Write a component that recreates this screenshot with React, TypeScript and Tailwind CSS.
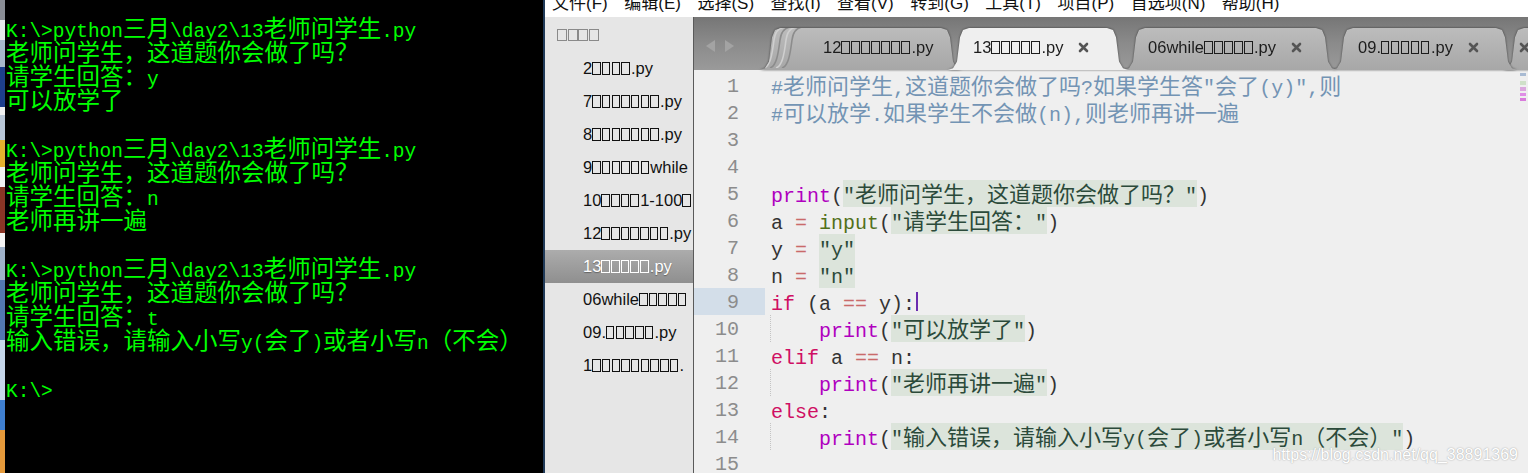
import React from 'react';

const CJK = /([\u2E80-\u9FFF\u3000-\u303F\uFF00-\uFFEF]+)/;

function Mixed({ text, cjk }: { text: string; cjk: string }) {
  return (
    <>
      {text.split(CJK).map((s, i) =>
        s === '' ? null : i % 2 === 1 ? (
          <span key={i} className={cjk}>
            {s}
          </span>
        ) : (
          <span key={i}>{s}</span>
        ),
      )}
    </>
  );
}

// missing-glyph boxes, as the editor shows them
function Tofu({ text, box }: { text: string; box: string }) {
  return (
    <>
      {text.split('').map((c, i) =>
        c === '□' ? <span key={i} className={box} /> : <span key={i}>{c}</span>,
      )}
    </>
  );
}

const strip: [number, string][] = [
  [20, '#8a8e96'],
  [20, '#e4e6ea'],
  [27, '#a9b8cc'],
  [40, '#1e3f8e'],
  [8, '#f0f0f0'],
  [25, '#b8c6d6'],
  [27, '#e3b22e'],
  [20, '#f2f2f2'],
  [46, '#8b3526'],
  [14, '#f4f4f4'],
  [33, '#9fb2c9'],
  [60, '#5277b0'],
  [60, '#c5d6ea'],
  [30, '#3f7fd0'],
  [43, '#e59a3b'],
];

const termLines = [
  'K:\\>python三月\\day2\\13老师问学生.py',
  '老师问学生，这道题你会做了吗？',
  '请学生回答：y',
  '可以放学了',
  '',
  'K:\\>python三月\\day2\\13老师问学生.py',
  '老师问学生，这道题你会做了吗？',
  '请学生回答：n',
  '老师再讲一遍',
  '',
  'K:\\>python三月\\day2\\13老师问学生.py',
  '老师问学生，这道题你会做了吗？',
  '请学生回答：t',
  '输入错误，请输入小写y(会了)或者小写n（不会）',
  '',
  'K:\\>',
];

const menu = ['文件(F)', '编辑(E)', '选择(S)', '查找(I)', '查看(V)', '转到(G)', '工具(T)', '项目(P)', '首选项(N)', '帮助(H)'];

const files = [
  '2□□□□.py',
  '7□□□□□□□.py',
  '8□□□□□□□.py',
  '9□□□□□□while',
  '10□□□□1-100□',
  '12□□□□□□□.py',
  '13□□□□□.py',
  '06while□□□□□',
  '09.□□□□□.py',
  '1□□□□□□□□□.',
];

const colors: Record<string, string> = {
  cm: 'text-[#7394b4]',
  kw: 'text-[#cf0f63]',
  fn: 'text-[#b000bf]',
  bi: 'text-[#52701a]',
  op: 'text-[#c96a6a]',
  st: 'bg-[#dce4db] text-[#2b4a3a]',
  pl: 'text-[#333333]',
  ig: 'border-l border-dotted border-[#c4c4c4] -ml-px',
};

type Tok = [string, string];

const code: Tok[][] = [
  [['#老师问学生,这道题你会做了吗?如果学生答"会了(y)",则', 'cm']],
  [['#可以放学.如果学生不会做(n),则老师再讲一遍', 'cm']],
  [],
  [],
  [['print', 'fn'], ['(', 'pl'], ['"老师问学生，这道题你会做了吗？"', 'st'], [')', 'pl']],
  [['a ', 'pl'], ['=', 'op'], [' ', 'pl'], ['input', 'bi'], ['(', 'pl'], ['"请学生回答："', 'st'], [')', 'pl']],
  [['y ', 'pl'], ['=', 'op'], [' ', 'pl'], ['"y"', 'st']],
  [['n ', 'pl'], ['=', 'op'], [' ', 'pl'], ['"n"', 'st']],
  [['if', 'kw'], [' (a ', 'pl'], ['==', 'op'], [' y):', 'pl'], ['', 'caret']],
  [['    ', 'ig'], ['print', 'fn'], ['(', 'pl'], ['"可以放学了"', 'st'], [')', 'pl']],
  [['elif', 'kw'], [' a ', 'pl'], ['==', 'op'], [' n:', 'pl']],
  [['    ', 'ig'], ['print', 'fn'], ['(', 'pl'], ['"老师再讲一遍"', 'st'], [')', 'pl']],
  [['else', 'kw'], [':', 'pl']],
  [['    ', 'ig'], ['print', 'fn'], ['(', 'pl'], ['"输入错误，请输入小写y(会了)或者小写n（不会）"', 'st'], [')', 'pl']],
  [],
];

const tabClip =
  '[clip-path:polygon(0_100%,5px_96%,9px_80%,12px_22%,15px_5%,21px_0,calc(100%_-_21px)_0,calc(100%_-_15px)_5%,calc(100%_-_12px)_22%,calc(100%_-_9px)_80%,calc(100%_-_5px)_96%,100%_100%)]';

const tabBox = 'mr-[1.5px] inline-block h-[13px] w-[8.5px] border border-current align-[-1px]';

function Close() {
  return (
    <svg width="11" height="11" viewBox="0 0 11 11" className="shrink-0">
      <path d="M2 2L9 9M9 2L2 9" stroke="#555" strokeWidth="2.6" strokeLinecap="round" />
    </svg>
  );
}

function Tab({
  outer,
  inner,
  label,
  active,
  close = true,
  children,
}: {
  outer: string;
  inner: string;
  label?: string;
  active?: boolean;
  close?: boolean;
  children?: React.ReactNode;
}) {
  return (
    <div className={`${outer} h-[42px] shrink-0 drop-shadow-[0_0_1px_rgba(0,0,0,0.55)]`}>
      <div
        className={`${tabClip} ${inner} flex h-full items-center gap-[15px] whitespace-nowrap pb-[4px] text-[16.5px] text-[#1c1c1c] ${
          active ? 'bg-[#efefef]' : 'bg-gradient-to-b from-[#bcbcbc] to-[#a7a7a7]'
        }`}
      >
        {children}
        {label && (
          <span>
            <Tofu text={label} box={tabBox} />
          </span>
        )}
        {close && <Close />}
      </div>
    </div>
  );
}

function TabBar() {
  return (
    <div className="flex h-[53px] shrink-0 bg-gradient-to-b from-[#767676] via-[#8b8b8b] to-[#9a9a9a] pt-[11px]">
      <div className="flex w-[66px] shrink-0 items-center gap-[8px] pb-[6px] pl-[11px]">
        <svg width="11" height="14" viewBox="0 0 11 14">
          <path d="M10 1L1 7L10 13Z" fill="#a3a3a3" />
        </svg>
        <svg width="11" height="14" viewBox="0 0 11 14">
          <path d="M1 1L10 7L1 13Z" fill="#a3a3a3" />
        </svg>
      </div>
      <div className="flex h-[42px] items-end">
        <Tab outer="w-[202px] relative z-[1]" inner="pl-[4px]" label="12□□□□□□□.py" close={false}>
          <svg width="44" height="42" viewBox="0 0 44 42" className="shrink-0">
            {[0, 6, 12, 18].map((o) => (
              <path
                key={o}
                d={`M${o} 42C${o + 6} 40 ${o + 8} 30 ${o + 10} 14C${o + 11} 6 ${o + 14} 2 ${o + 20} 1`}
                fill="none"
                stroke={o % 12 === 0 ? '#cfcfcf' : '#8c8c8c'}
                strokeWidth="1.6"
              />
            ))}
          </svg>
        </Tab>
        <Tab outer="-ml-[14px] w-[180px] relative z-[4]" inner="pl-[25px]" label="13□□□□□.py" active />
        <Tab outer="-ml-[4px] w-[213px] relative z-[3]" inner="pl-[24px]" label="06while□□□□□.py" />
        <Tab outer="-ml-[5px] w-[185px] relative z-[2]" inner="pl-[26px]" label="09.□□□□□.py" />
        <Tab outer="-ml-[14px] w-[60px] relative z-[1]" inner="pl-[16px]" />
      </div>
    </div>
  );
}

function Editor() {
  return (
    <div className="relative flex min-h-0 flex-1 overflow-hidden bg-[#efefef] pt-[2px] font-['Liberation_Mono',monospace] text-[20px]">
      <div className="w-[71px] shrink-0">
        {code.map((_, i) => (
          <div
            key={i}
            className={`h-[27px] pr-[26px] pt-[1px] text-right leading-[27px] text-[#8c8c8c] ${i === 8 ? 'bg-[#d3dee9]' : ''}`}
          >
            {i + 1}
          </div>
        ))}
      </div>
      <div className="min-w-0 flex-1 overflow-hidden pl-[6px]">
        {code.map((line, i) => (
          <div key={i} className="h-[27px] whitespace-pre leading-[27px]">
            {line.map(([t, k], j) =>
              k === 'caret' ? (
                <span key={j} className="ml-[1px] mt-[4px] inline-block h-[19px] w-[1.5px] bg-[#6a2cb0] align-top" />
              ) : (
                <span key={j} className={`inline-block h-[27px] pt-[3px] align-top ${colors[k]}`}>
                  <Mixed text={t} cjk="font-['Noto_Sans_CJK_SC',sans-serif] text-[22px] leading-[0]" />
                </span>
              ),
            )}
          </div>
        ))}
      </div>
      <div className="flex w-[8px] shrink-0 flex-col gap-[2px] pt-[1px]">
        <div className="h-[3px] w-[6px] bg-[#a9bbd3]" />
        <div className="mt-[3px] h-[4px] w-[6px] bg-[#cfe0c8]" />
        <div className="h-[4px] w-[6px] bg-[#dba7de]" />
        <div className="h-[3px] w-[6px] bg-[#e08ee6]" />
        <div className="h-[3px] w-[6px] bg-[#d97cdc]" />
      </div>
      <div className="absolute bottom-[10px] right-[10px] font-['Liberation_Sans',sans-serif] text-[16px] leading-[16px] text-white [text-shadow:0_0_1.5px_#8f8f8f]">
        https://blog.csdn.net/qq_38891369
      </div>
    </div>
  );
}

export default function App() {
  return (
    <div className="flex h-[473px] w-[1528px] overflow-hidden bg-black [text-spacing-trim:space-all]">
      <div className="flex w-[5px] shrink-0 flex-col">
        {strip.map(([h, c], i) => (
          <div key={i} className="shrink-0" style={{ height: h, background: c }} />
        ))}
      </div>

      <div className="w-[538px] shrink-0 overflow-hidden pl-[1px] pt-[20px] font-['Liberation_Mono',monospace] text-[19.5px] text-[#00ff00]">
        {termLines.map((l, i) => (
          <div key={i} className="h-[24px] whitespace-pre leading-[24px]">
            <Mixed text={l} cjk="font-['Noto_Sans_CJK_SC',sans-serif] text-[23.5px] leading-[0]" />
          </div>
        ))}
      </div>

      <div className="w-[2px] shrink-0 bg-[#203a58]" />

      <div className="flex w-[983px] shrink-0 flex-col bg-[#efefef] font-['Liberation_Sans','Noto_Sans_CJK_SC',sans-serif]">
        <div className="h-[17px] shrink-0 overflow-hidden bg-white">
          <div className="-mt-[6px] flex gap-[16.5px] pl-[7px] text-[17px] leading-[20px] text-[#111]">
            {menu.map((m) => (
              <span key={m}>{m}</span>
            ))}
          </div>
        </div>

        <div className="flex min-h-0 flex-1">
          <div className="w-[148px] shrink-0 overflow-hidden bg-[#e6e6e6]">
            <div className="flex h-[35px] items-center pl-[12px] text-[#8a8a8a]">
              <Tofu text="□□□□" box="mr-[0.5px] inline-block h-[12px] w-[10px] border border-current" />
            </div>
            {files.map((f, i) => (
              <div
                key={i}
                className={`flex h-[33px] items-center whitespace-nowrap pl-[38px] text-[16.5px] ${
                  i === 6
                    ? 'bg-gradient-to-b from-[#acacac] to-[#8f8f8f] text-white [text-shadow:0_1px_1px_rgba(0,0,0,0.35)]'
                    : 'text-[#111]'
                }`}
              >
                <Tofu text={f} box="mr-[1.2px] inline-block h-[13px] w-[8.5px] border border-current align-[-1px]" />
              </div>
            ))}
          </div>
          <div className="w-px shrink-0 bg-[#5a5a5a]" />
          <div className="flex min-w-0 flex-1 flex-col">
            <TabBar />
            <Editor />
          </div>
        </div>
      </div>
    </div>
  );
}
